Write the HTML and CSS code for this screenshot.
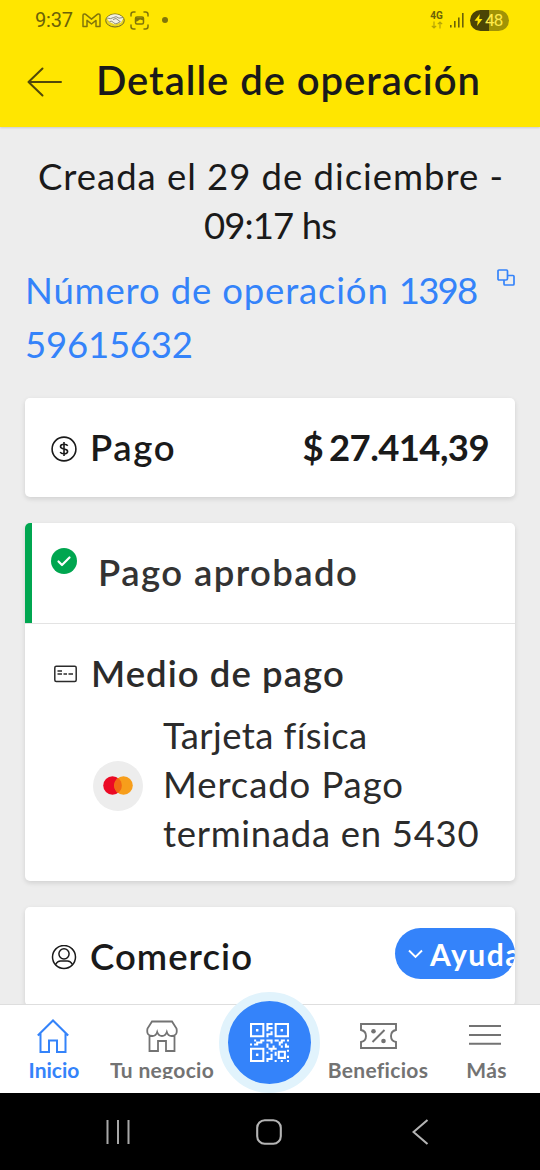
FILE: index.html
```html
<!DOCTYPE html>
<html lang="es">
<head>
<meta charset="utf-8">
<title>Detalle de operación</title>
<link rel="stylesheet" href="styles.css">
</head>
<body>
<div class="screen">
  <header class="top">
    <div class="status">
      <span class="clock">9:37</span>
      <svg class="s-gmail" width="19" height="15" viewBox="0 0 19 15" fill="none" stroke="#81750a" stroke-width="1.5" stroke-linejoin="round"><path d="M1 13.6V2.2Q1 .9 2.3 .9L3.4 1.2 9.500 6.200 15.600 1.200 16.700 .9Q18 .9 18 2.200V13.600H14V7.400L9.500 11 5 7.400V13.600Z"/></svg>
      <svg class="s-hands" width="20" height="15" viewBox="0 0 20 15"><ellipse cx="10" cy="7.500" rx="9.300" ry="6.500" fill="#e8d420" stroke="#6f6825" stroke-width="1"/><path d="M1.500 5Q5 1.200 10 1.200T18.500 5L16 9.500 10 11.500 4.500 9Z" fill="#f2f0e6"/><path d="M2 5Q6 6.500 8.500 4.500T14 5.200L18 4.500M4.500 8.500Q7 7.500 8.500 9.500T12 10.500L15.500 8.500M8 6.500L11 5.500 15 8.500" fill="none" stroke="#77745c" stroke-width=".8"/></svg>
      <svg class="s-shot" width="19" height="19" viewBox="0 0 19 19" fill="none" stroke="#81750a" stroke-width="1.500" stroke-linecap="round"><path d="M1 5V3.500Q1 1 3.500 1H5M14 1H15.500Q18 1 18 3.500V5M18 14V15.500Q18 18 15.500 18H14M5 18H3.500Q1 18 1 15.500V14"/><rect x="5.500" y="6" width="8" height="7" rx="1.500"/><path d="M5.500 6.700H13.500V9.500L10 8.500 7 10.500H5.500Z" fill="#81750a" stroke="none"/></svg>
      <span class="dot"></span>
      <span class="net"><b>4G</b><svg width="12" height="8" viewBox="0 0 12 8" fill="none" stroke="#b5a507" stroke-width="1.200"><path d="M3 .5V7M.8 4.800L3 7 5.200 4.800M9 7.500V1M6.800 3.200L9 1 11.200 3.200"/></svg></span>
      <svg class="s-bars" width="14" height="15" viewBox="0 0 14 15" fill="#6b6208"><rect x="0" y="12" width="1.600" height="2.500"/><rect x="4" y="8" width="1.600" height="6.500"/><rect x="8" y="4.500" width="1.600" height="10"/><rect x="12" y="0" width="1.600" height="14.500"/></svg>
      <span class="battery"><svg width="9" height="12" viewBox="0 0 9 12"><path d="M5.800 0L.5 6.800H3.800L3 12 8.500 5H5.200Z" fill="#ffe600"/></svg>48</span>
    </div>
    <div class="titlebar">
      <svg width="35" height="30" viewBox="0 0 35 30" fill="none" stroke="#51490a" stroke-width="2" stroke-linecap="round" stroke-linejoin="round"><path d="M34 15H1.500M15.500 1.500L1.500 15 15.500 28.500"/></svg>
      <h1>Detalle de operación</h1>
    </div>
  </header>

  <main>
    <p class="created"><span class="c1">Creada el 29 de diciembre -</span><br><span class="c2">09:17 hs</span></p>
    <div class="number">
      <p><span class="n1">Número de operación <span class="digits">1398</span></span><br><span class="n2">59615632</span></p>
      <svg width="18" height="17" viewBox="0 0 18 17" fill="none" stroke="#3483fa" stroke-width="1.700"><path d="M7 11H2Q1 11 1 10V2Q1 1 2 1H9.500Q10.500 1 10.500 2V9.500Q10.500 11 9 11H7V15Q7 16 8 16H16Q17 16 17 15V7.500Q17 6.500 16 6.500H10.500"/></svg>
    </div>

    <section class="card pay">
      <svg class="ic" width="26" height="26" viewBox="0 0 26 26" fill="none" stroke="#1a1a1a" stroke-width="1.600"><circle cx="13" cy="13" r="11.900"/><path d="M16.700 9.700Q15.800 8.300 13 8.300 9.500 8.300 9.500 10.600 9.500 12.500 13 13 16.600 13.500 16.600 15.500 16.600 17.800 13 17.800 10 17.800 9.200 16M13 6V20"/></svg>
      <h2 class="t-pago">Pago</h2>
      <strong class="amount"><span>$</span>27.414,39</strong>
    </section>

    <section class="card detail">
      <div class="approved">
        <svg width="26" height="26" viewBox="0 0 26 26"><circle cx="13" cy="13" r="13" fill="#00a650"/><path d="M7.500 13.500L11 17 18.500 9.500" fill="none" stroke="#fff" stroke-width="2.200" stroke-linecap="round" stroke-linejoin="round"/></svg>
        <span class="t-apr">Pago aprobado</span>
      </div>
      <div class="method">
        <div class="mhead">
          <svg width="23" height="18" viewBox="0 0 23 18" fill="none" stroke="#2b2b2b" stroke-width="1.500"><rect x=".8" y="1.200" width="21.400" height="15.200" rx="1.500"/><path d="M3.500 6H8M3.500 9H8M9.500 9H13M14.500 9H19"/></svg>
          <h2 class="t-medio">Medio de pago</h2>
        </div>
        <div class="mbody">
          <span class="mc"><svg width="30" height="19" viewBox="0 0 30 19"><circle cx="9.500" cy="9.500" r="9.300" fill="#eb0a25"/><circle cx="20.500" cy="9.500" r="9.300" fill="#f79e1b"/><path d="M15 2A9.300 9.300 0 0 1 15 17 9.300 9.300 0 0 1 15 2" fill="#f26a14"/></svg></span>
          <p><span class="m1">Tarjeta física</span><br><span class="m2">Mercado Pago</span><br><span class="m3">terminada en 5430</span></p>
        </div>
      </div>
    </section>

    <section class="card shop">
      <svg class="ic" width="26" height="26" viewBox="0 0 26 26" fill="none" stroke="#1a1a1a" stroke-width="1.500"><circle cx="13" cy="12" r="11.500"/><circle cx="13" cy="8.800" r="5.100"/><path d="M4.500 19.500Q6.500 16 9.500 16H16.500Q19.500 16 21.500 19.500"/></svg>
      <h2 class="t-com">Comercio</h2>
      <button class="help"><svg width="15" height="10" viewBox="0 0 15 10" fill="none" stroke="#fff" stroke-width="1.900"><path d="M1 1.500L7.500 8 14 1.500"/></svg><span>Ayuda</span></button>
    </section>
  </main>

  <nav class="tabs">
    <a class="tab on"><svg width="32" height="36" viewBox="0 0 32 36" fill="none" stroke="#3483fa" stroke-width="2"><path d="M.8 17.500L16 2.500 31.200 17.500M3.500 15V34H12V22.500H20V34H28.500V15"/></svg><span class="l1">Inicio</span></a>
    <a class="tab"><svg width="32" height="36" viewBox="0 0 32 36" fill="none" stroke="#737373" stroke-width="1.800"><path d="M6 3.500H26L30.500 10.500Q32 18 25.500 18 22 18 20.800 14 19.500 18 16 18T11.200 14Q10 18 6.500 18 0 18 1.500 10.500ZM3.500 17.500V33H12V23H20V33H28.500V17.500"/></svg><span class="l2">Tu negocio</span></a>
    <a class="qr"><svg width="39" height="39" viewBox="0 0 19 19" fill="#fff" fill-rule="evenodd"><path d="M0 0H7V7H0ZM1 1V6H6V1ZM2.900 2.900H4.100V4.100H2.900ZM12 0H19V7H12ZM13 1V6H18V1ZM14.900 2.900H16.100V4.100H14.900ZM0 12H7V19H0ZM1 13V18H6V13ZM2.900 14.900H4.100V16.100H2.900ZM8 0H11V1H9V2H11V3H9V4H8ZM10 4H11V6H9V7H8V5H10ZM2 8H3V9H5V8H7V9H6V10H4V11H2V10H3V9H2ZM0 10H1V11H0ZM8 8H11V9H8ZM10 9H11V10H10ZM12 8H14V9H12ZM15 8H17V9H16V10H15V11H14V9H15ZM18 8H19V9H18ZM8 10H9V12H8ZM9 12H11V14H10V13H9ZM11 11H12V12H13V13H11ZM15 11H16V12H15ZM17 10H18V11H19V12H17ZM13.500 13.500H17.500V17.500H13.500ZM14.500 14.500V16.500H16.500V14.500ZM12 14H13V16H12ZM8 14H9V15H8ZM10 15H11V18H9V19H8V17H10ZM12 18H13V19H12ZM18 13H19V14H18ZM18 16H19V17H18ZM15 18H16V19H15ZM18 18H19V19H18Z"/></svg></a>
    <a class="tab"><svg width="37" height="36" viewBox="0 0 37 36" fill="none" stroke="#737373" stroke-width="1.900"><path d="M1 6H36V12Q31 13 31 18T36 24V30H1V24Q6 23 6 18T1 12Z"/><path d="M12.500 24L24.500 12"/><circle cx="13.500" cy="13.200" r="2.300" fill="#737373" stroke="none"/><circle cx="23.500" cy="23" r="2.300" fill="#737373" stroke="none"/></svg><span class="l3">Beneficios</span></a>
    <a class="tab"><svg width="32" height="36" viewBox="0 0 32 36" fill="none" stroke="#737373" stroke-width="2"><path d="M0 8H32M0 17H32M0 25.700H32"/></svg><span class="l4">Más</span></a>
  </nav>

  <footer class="sys">
    <svg width="24" height="26" viewBox="0 0 24 26" stroke="#a8a8a8" stroke-width="2"><path d="M1.500 1V25M12 1V25M22.500 1V25"/></svg>
    <svg class="home" width="26" height="26" viewBox="0 0 26 26" fill="none" stroke="#b4b4b4" stroke-width="2.100"><rect x="1.200" y="1.200" width="23.600" height="23.600" rx="7.500"/></svg>
    <svg width="17" height="26" viewBox="0 0 17 26" fill="none" stroke="#b4b4b4" stroke-width="2.100"><path d="M15.500 1L1.500 13 15.500 25"/></svg>
  </footer>
</div>
</body>
</html>
```
FILE: styles.css
```css
* { box-sizing: border-box; margin: 0; padding: 0; }
body { font-family: Lato, "Open Sans", sans-serif; color: #1a1a1a; background: #ededed; font-variant-ligatures: none; }
svg { display: block; flex: none; }
span { white-space: nowrap; }
.screen { width: 540px; height: 1170px; display: flex; flex-direction: column; overflow: hidden; }

.top { height: 127px; flex: none; background: #ffe600; box-shadow: 0 1px 2px rgba(0,0,0,.14); }
.status { height: 40px; padding: 0 31px 0 35px; display: flex; align-items: center; font-family: Roboto, sans-serif; color: #6b6208; }
.clock { font-size: 20px; letter-spacing: -.2px; width: 47px; }
.s-hands { margin-left: 4px; }
.s-shot { margin-left: 5px; }
.dot { width: 6px; height: 6px; border-radius: 50%; background: #81750a; margin-left: 13px; }
.net { margin-left: auto; width: 13px; display: flex; flex-direction: column; align-items: center; gap: 1px; font-size: 10px; line-height: 8px; }
.s-bars { margin-left: 7px; }
.battery { width: 39px; height: 21px; margin-left: 6px; padding-left: 4px; border-radius: 11px; display: flex; align-items: center; gap: 2px; background: linear-gradient(90deg, #4b4505 49%, #a19306 49%); color: #ffe94a; font-size: 17px; letter-spacing: -.8px; line-height: 21px; }
.titlebar { display: flex; align-items: center; height: 84px; padding-left: 27px; }
h1 { font-size: 40px; font-weight: 600; line-height: 48px; margin: -4px 0 0 34px; letter-spacing: .95px; white-space: nowrap; }

main { flex: 1; min-height: 0; overflow: hidden; padding: 25px 25px 0; display: flex; flex-direction: column; }
.created { text-align: center; font-size: 36.500px; line-height: 49px; }
.c1 { letter-spacing: .96px; margin-left: 2px; }
.c2 { letter-spacing: -.9px; }
.number { display: flex; justify-content: space-between; margin-top: 13px; color: #3483fa; font-size: 36.500px; line-height: 54px; }
.number svg { margin-top: 6px; }
.n1 { letter-spacing: .84px; }
.digits { letter-spacing: -1.800px; }
.n2 { letter-spacing: -.2px; }
.card { flex: none; background: #fff; border-radius: 5px; box-shadow: 0 2px 5px rgba(0,0,0,.12); overflow: hidden; }
h2 { font-size: 36.500px; font-weight: 600; line-height: 49px; letter-spacing: 1.050px; white-space: nowrap; }
.pay { margin-top: 27px; height: 99px; display: flex; align-items: center; padding: 0 26px; }
.ic { position: relative; top: 1px; }
.pay h2 { margin-left: 13px; letter-spacing: 1.600px; }
.amount { margin-left: auto; font-size: 36.500px; font-weight: 700; line-height: 49px; letter-spacing: -.6px; }
.amount span { margin-right: 6px; }
.detail { margin-top: 26px; height: 358px; }
.approved { height: 100px; border-left: 7px solid #00a650; display: flex; padding: 25px 19px; font-size: 36.500px; font-weight: 600; line-height: 49px; color: #333; }
.approved .t-apr { margin-left: 21px; letter-spacing: 1.430px; }
.method { border-top: 1px solid #e3e3e3; padding: 25px 29px; color: #2b2b2b; }
.mhead { display: flex; align-items: center; }
.mhead h2 { margin-left: 14px; }
.mbody { display: flex; align-items: center; margin: 13px 0 0 39px; font-size: 36.500px; line-height: 49px; }
.mc { width: 50px; height: 50px; border-radius: 50%; background: #ededed; display: flex; align-items: center; justify-content: center; flex: none; position: relative; top: 1px; }
.mbody p { margin-left: 20px; }
.m1 { letter-spacing: .4px; }
.m2 { letter-spacing: .9px; }
.m3 { letter-spacing: .7px; }
.shop { margin-top: 26px; height: 99px; display: flex; align-items: center; padding-left: 26px; }
.shop h2 { margin-left: 13px; }
.help { margin: -6px 0 0 auto; width: 120px; height: 51px; flex: none; border: 0; border-radius: 26px; background: #3483fa; color: #fff; display: flex; align-items: center; padding-left: 13px; font: 700 30px/40px Lato, sans-serif; letter-spacing: 1.500px; overflow: hidden; }
.help span { margin-left: 7px; }

.tabs { height: 89px; flex: none; position: relative; background: #fff; border-top: 1px solid #dedede; display: grid; grid-template-columns: 108px 108px 108px 108px 108px; }
.tab { display: flex; flex-direction: column; align-items: center; padding-top: 13px; color: #737373; font-size: 21px; font-weight: 700; letter-spacing: .3px; }
.tab span { margin-top: 3px; line-height: 25px; }
.tab .l1 { letter-spacing: 0; }
.tab .l2 { height: 22px; overflow: hidden; }
.tab.on { color: #3483fa; }
.tab.on svg, .tab:last-child svg { margin-right: 2px; }
.tab .l4 { margin-left: 1px; }
.qr { width: 101px; height: 101px; margin: -13px 0 0 3px; border: 9px solid #e1f3fc; border-radius: 50%; background: #3483fa; display: flex; align-items: center; justify-content: center; }
.sys { height: 77px; flex: none; position: relative; background: #000; display: flex; align-items: center; padding: 0 111px 0 106px; justify-content: space-between; }
.home { margin-right: 4px; }
```
